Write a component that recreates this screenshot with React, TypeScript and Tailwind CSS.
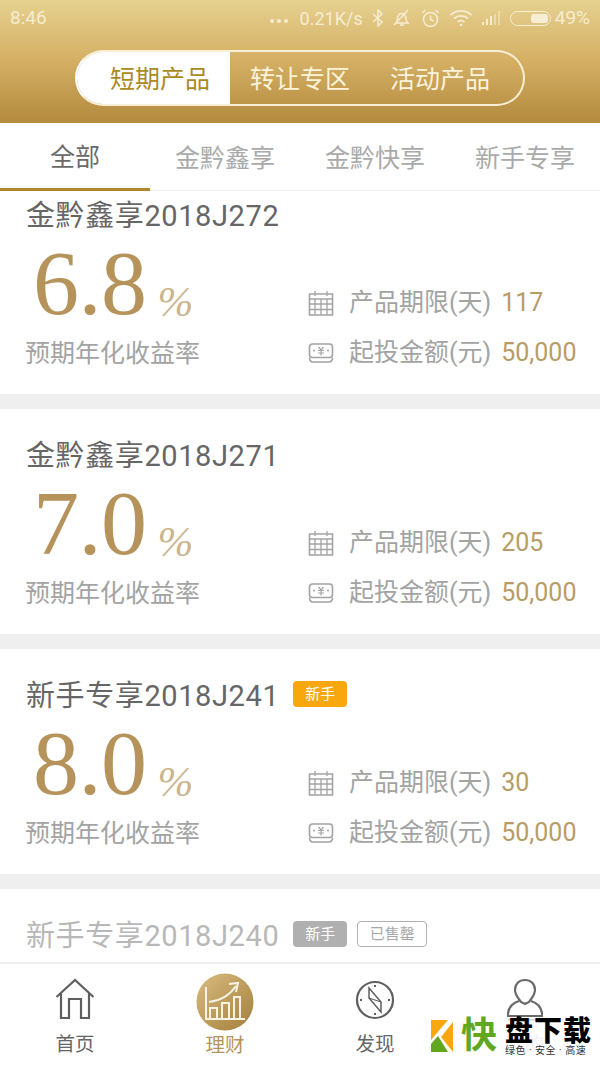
const Calendar = () => (
  <svg className="shrink-0" width="26" height="26" viewBox="0 0 26 26" fill="none" stroke="#a3a3a3" strokeWidth="1.6">
    <path d="M1.500 4h23v21h-23z" />
    <path d="M7 1v5M19 1v5M1.500 9h23M1.500 14h23M1.500 19.500h23M7 9v16M13 9v16M19 9v16" strokeWidth="1.300" />
  </svg>
);

const Cash = () => (
  <svg className="shrink-0" width="26" height="22" viewBox="0 0 26 22" fill="none" stroke="#a3a3a3" strokeWidth="1.6">
    <rect x="1.500" y="2" width="23" height="13.500" rx="3" />
    <path d="M1.500 15.500c0 3 1.500 4.500 4 4.500h15c2.500 0 4-1.500 4-4.500" />
    <path d="M10.500 5l2.500 3 2.500-3M10 8.500h6M10 11h6M13 8v5.500" strokeWidth="1.200" />
    <circle cx="6" cy="8.500" r="1" fill="#a3a3a3" stroke="none" />
    <circle cx="20" cy="8.500" r="1" fill="#a3a3a3" stroke="none" />
  </svg>
);

const Card = ({
  name,
  rate,
  days,
  tag,
  soldOut,
  className,
}: {
  name: string;
  rate: string;
  days: string;
  tag?: boolean;
  soldOut?: boolean;
  className?: string;
}) => {
  return (
    <div className={`bg-white h-[225px] shrink-0 px-[25px] pt-[29px] ${className ?? ""}`}>
      <div className={`flex items-center h-[36px] pl-[1px] text-[29px] leading-[36px] ${soldOut ? "text-[#b8b8b8]" : "text-[#666666]"}`}>
        <span className="tracking-[0.6px] whitespace-nowrap">{name}</span>
        {tag && (
          <span className={`ml-[14px] mt-[-4px] w-[54px] h-[26px] rounded-[4px] flex items-center justify-center text-[15px] leading-none text-white ${soldOut ? "bg-[#b0b0b0]" : "bg-[#f9a70f]"}`}>
            新手
          </span>
        )}
        {soldOut && (
          <span className="ml-[10px] mt-[-4px] w-[70px] h-[26px] rounded-[4px] border border-[#b0b0b0] flex items-center justify-center text-[15px] leading-none text-[#a8a8a8]">
            已售罄
          </span>
        )}
      </div>
      <div className="flex justify-between mt-[7px]">
        <div className="w-[260px]">
          <div className="flex items-end h-[84px] pl-[8px] text-[#b5935a] font-['Liberation_Serif',serif]">
            <span className="text-[92px] leading-[84px] tracking-[-0.5px]">{rate}</span>
            <span className="ml-[11px] mb-[1px] text-[43px] leading-[44px] italic font-light text-[#cbb68f]">%</span>
          </div>
          <div className="mt-[13px] text-[25px] leading-[32px] text-[#a3a3a3]">预期年化收益率</div>
        </div>
        <div className="flex flex-col pt-[42px] w-[267px] text-[25px] leading-[32px] whitespace-nowrap">
          <div className="flex items-center h-[40px]">
            <Calendar />
            <span className="ml-[15px] text-[#a3a3a3]">产品期限(天)</span>
            <span className="ml-[10px] text-[#b89c66]">{days}</span>
          </div>
          <div className="flex items-center h-[40px] mt-[10px]">
            <Cash />
            <span className="ml-[15px] text-[#a3a3a3]">起投金额(元)</span>
            <span className="ml-[10px] text-[#b89c66]">50,000</span>
          </div>
        </div>
      </div>
    </div>
  );
};

const StatusBar = () => (
  <div className="h-[36px] flex items-center justify-between px-[10px] text-[19px] text-[#f6edd2]">
    <span>8:46</span>
    <div className="flex items-center">
      <span className="flex gap-[3px] mr-[12px] mt-[6px]">
        <i className="w-[4px] h-[4px] rounded-full bg-[#f6edd2]" />
        <i className="w-[4px] h-[4px] rounded-full bg-[#f6edd2]" />
        <i className="w-[4px] h-[4px] rounded-full bg-[#f6edd2]" />
      </span>
      <span className="text-[18px]">0.21K/s</span>
      <svg className="ml-[9px]" width="12" height="18" viewBox="0 0 12 18" fill="none" stroke="#f6edd2" strokeWidth="1.500">
        <path d="M1 5l9 8-4 4V1l4 4-9 8" />
      </svg>
      <svg className="ml-[8px]" width="20" height="18" viewBox="0 0 20 18" fill="none" stroke="#f6edd2" strokeWidth="1.500">
        <path d="M4 14c2-2 1-5 2-7s3-3 5-2 3 3 3 5 1 3 2 4zM8 16h4M2 16L16 1" />
      </svg>
      <svg className="ml-[9px]" width="19" height="19" viewBox="0 0 19 19" fill="none" stroke="#f6edd2" strokeWidth="1.500">
        <circle cx="9.500" cy="10.500" r="7" />
        <path d="M9.500 6.500v4l3 1.500M1.500 4l3-3M17.500 4l-3-3" />
      </svg>
      <svg className="ml-[9px]" width="24" height="18" viewBox="0 0 24 18" fill="none" stroke="#f6edd2" strokeWidth="1.800">
        <path d="M1.500 6c6-5.500 15-5.500 21 0M5 9.500c4-3.500 10-3.500 14 0M8.500 13c2-1.500 5-1.500 7 0" />
        <circle cx="12" cy="16" r="1.300" fill="#f6edd2" stroke="none" />
      </svg>
      <svg className="ml-[8px]" width="20" height="14" viewBox="0 0 20 14" fill="#f6edd2">
        <path d="M1 11h2v3H1zM5 8h2v6H5zM9 5h2v9H9z" />
        <path d="M13 3h2v11h-2zM17 0h2v14h-2z" opacity="0.500" />
      </svg>
      <span className="ml-[9px] relative w-[41px] h-[15px] rounded-full border border-[#f6edd2]">
        <span className="absolute right-[2px] top-[2px] w-[17px] h-[9px] rounded-[3px] bg-[#f6edd2]" />
      </span>
      <span className="ml-[4px]">49%</span>
    </div>
  </div>
);

export default function App() {
  return (
    <div className="relative w-[600px] h-[1067px] overflow-hidden flex flex-col bg-white font-['Roboto','Noto_Sans_CJK_SC',sans-serif]">
      <header className="h-[123px] shrink-0 bg-gradient-to-b from-[#e6d190] via-[#d4af63] to-[#b38a3e]">
        <StatusBar />
        <div className="mx-[75px] mt-[14px] h-[56px] flex rounded-full border-2 border-[#f8efd6] border-l-white overflow-hidden text-[25px]">
          <div className="w-[153px] bg-white text-[#ab8a1f] flex items-center justify-end pr-[20px] pt-[3px]">短期产品</div>
          <div className="w-[140px] text-[#fbf3dc] flex items-center justify-center pt-[3px]">转让专区</div>
          <div className="flex-1 text-[#fbf3dc] flex items-center pl-[20px] pt-[3px]">活动产品</div>
        </div>
      </header>

      <nav className="h-[68px] shrink-0 flex border-b border-[#eeeeee] text-[25px] text-[#aaaaaa]">
        <div className="w-[150px] flex items-center justify-center border-b-[3px] border-[#b08a2a] mb-[-1px] pt-[5px] text-[#6a6a6a]">全部</div>
        <div className="w-[150px] flex items-center justify-center pt-[5px]">金黔鑫享</div>
        <div className="w-[150px] flex items-center justify-center pt-[5px]">金黔快享</div>
        <div className="w-[150px] flex items-center justify-center pt-[5px]">新手专享</div>
      </nav>

      <main className="flex-1 min-h-0 overflow-hidden flex flex-col gap-[15px] bg-[#efefef]">
        <Card className="mt-[-22px]" name="金黔鑫享2018J272" rate="6.8" days="117" />
        <Card name="金黔鑫享2018J271" rate="7.0" days="205" />
        <Card name="新手专享2018J241" rate="8.0" days="30" tag />
        <Card name="新手专享2018J240" rate="7.5" days="30" tag soldOut />
      </main>

      <footer className="h-[105px] shrink-0 border-t-2 border-[#eeeeee] bg-white flex text-[19.500px] text-[#666666]">
        <div className="w-[150px] flex flex-col items-center pt-[14px]">
          <svg width="40" height="44" viewBox="0 0 40 44" fill="none" stroke="#5f5f5f" strokeWidth="2.200">
            <path d="M1.500 19L20 2l18.500 17M6 15v25h8V21h12v19h8V15" />
          </svg>
          <span className="mt-[11px] leading-[24px]">首页</span>
        </div>
        <div className="w-[150px] flex flex-col items-center pt-[9px] text-[#b5935a]">
          <svg width="58" height="58" viewBox="0 0 58 58" fill="none" stroke="#f8f2e4" strokeWidth="2">
            <defs>
              <linearGradient id="coin" x1="0" y1="0" x2="1" y2="1">
                <stop offset="0" stopColor="#d9bb7f" />
                <stop offset="1" stopColor="#a37f3c" />
              </linearGradient>
            </defs>
            <circle cx="29" cy="29" r="28.500" fill="url(#coin)" stroke="none" />
            <path d="M10 14v32h39M14 45V35h7v10M26 45V30h7v15M38 45V24h6v21M13 29c10-1 20-6 27-16" />
            <path d="M33 11l9-1-2 9" />
          </svg>
          <span className="mt-[3px] leading-[24px]">理财</span>
        </div>
        <div className="w-[150px] flex flex-col items-center pt-[16px]">
          <svg width="40" height="40" viewBox="0 0 40 40" fill="none" stroke="#5f5f5f" strokeWidth="2.200">
            <circle cx="20" cy="20" r="18" />
            <path d="M14 8l12 14 0 10-12-14z" strokeWidth="1.500" />
            <path d="M14 18l12 4" strokeWidth="1.200" />
            <path d="M20 5v2M20 33v2M5 20h2M33 20h2" strokeWidth="2" />
          </svg>
          <span className="mt-[13px] leading-[24px]">发现</span>
        </div>
        <div className="w-[150px] flex flex-col items-center pt-[14px]">
          <svg width="36" height="44" viewBox="0 0 36 44" fill="none" stroke="#6a6a6a" strokeWidth="2.200">
            <path d="M18 2c6 0 10 4 10 10 0 5-4 9-6 12l-4 2-4-2c-2-3-6-7-6-12C8 6 12 2 18 2z" />
            <path d="M12 23c-6 2-10 5-11 12v3h34v-3c-1-7-5-10-11-12" />
            <path d="M1 42h34" stroke="#cfcfcf" />
          </svg>
          <span className="mt-[11px] leading-[24px] text-[#dddddd]">我的</span>
        </div>
      </footer>

      <div className="absolute left-[431px] top-[1020px] flex items-start bg-white/60 h-[36px]">
        <svg width="22" height="32" viewBox="0 0 22 32">
          <path d="M0 0h17L0 20z" fill="#f9a70f" />
          <path d="M22 2v30L10 17z" fill="#f9a70f" />
          <path d="M0 24l7-8 10 16H0z" fill="#62a81e" />
        </svg>
        <span className="ml-[8px] mt-[-4px] text-[36px] leading-[40px] font-bold text-[#62a81e]">快</span>
        <div className="ml-[8px] flex flex-col items-start">
          <span className="text-[28px] leading-[24px] font-black text-black tracking-[1px]">盘下载</span>
          <span className="mt-[1px] text-[10px] leading-[11px] text-[#333333] whitespace-nowrap tracking-[0.5px]">绿色 · 安全 · 高速</span>
        </div>
      </div>
    </div>
  );
}
